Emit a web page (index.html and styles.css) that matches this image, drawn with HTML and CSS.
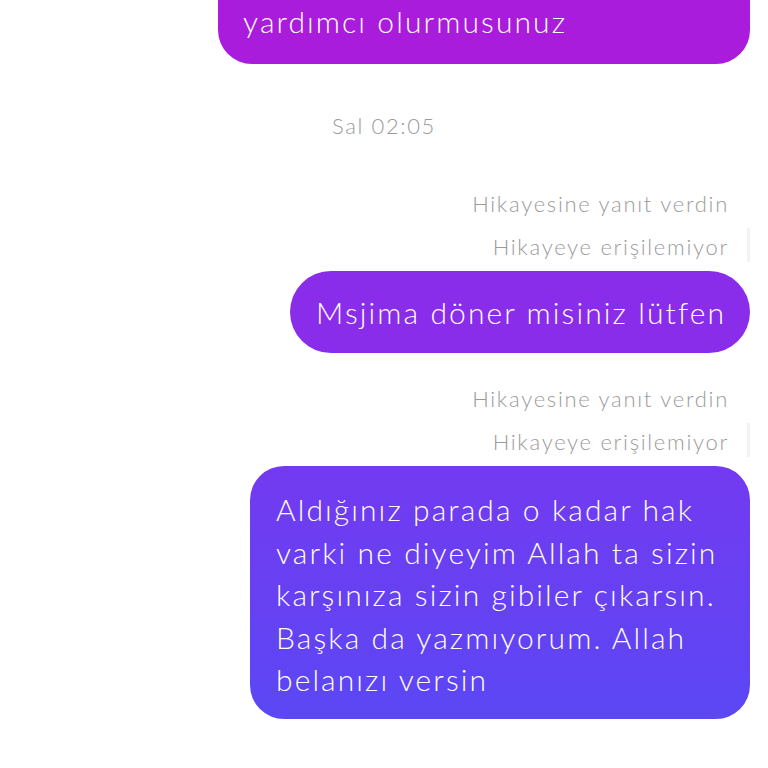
FILE: index.html
```html
<!DOCTYPE html>
<html lang="tr">
<head>
<meta charset="utf-8">
<link rel="stylesheet" href="styles.css">
</head>
<body>
<div class="thread">
  <div class="bubble bubble-top">yardımcı olurmusunuz</div>
  <div class="time">Sal 02:05</div>
  <div class="label first">Hikayesine yanıt verdin</div>
  <div class="label story"><span>Hikayeye erişilemiyor</span><i class="bar"></i></div>
  <div class="bubble bubble-pill">Msjima döner misiniz lütfen</div>
  <div class="label first second">Hikayesine yanıt verdin</div>
  <div class="label story"><span>Hikayeye erişilemiyor</span><i class="bar"></i></div>
  <div class="bubble bubble-long">Aldığınız parada o kadar hak<br>varki ne diyeyim Allah ta sizin<br>karşınıza sizin gibiler çıkarsın.<br>Başka da yazmıyorum. Allah<br>belanızı versin</div>
</div>
</body>
</html>
```

FILE: styles.css
```css
html, body {
  margin: 0;
  padding: 0;
  background: #ffffff;
}
.thread {
  width: 768px;
  height: 768px;
  overflow: hidden;
  display: flex;
  flex-direction: column;
  align-items: flex-end;
  padding-right: 18px;
  box-sizing: border-box;
  font-family: Lato, "Open Sans", sans-serif;
  font-weight: 300;
}
.bubble {
  color: #ffffff;
  font-size: 30px;
  letter-spacing: 2.1px;
  line-height: 42px;
  white-space: nowrap;
  box-sizing: border-box;
}
.bubble-top {
  width: 532px;
  background: #a91cdb;
  padding: 0 26px 22px 25px;
  border-radius: 0 0 34px 34px;
}
.time {
  align-self: center;
  margin: 47px -18px 0 0;
  color: #9b9b9b;
  font-size: 22px;
  letter-spacing: 1.6px;
  line-height: 30px;
}
.label {
  color: #9b9b9b;
  font-size: 22px;
  letter-spacing: 1.7px;
  line-height: 30px;
  margin-right: 21px;
}
.label.first { margin-top: 48px; }
.label.second { margin-top: 31px; }
.label.story {
  margin-top: 13px;
  margin-right: 0;
  display: flex;
  align-items: stretch;
  gap: 18px;
}
.label .bar {
  width: 3px;
  margin-top: -4px;
  background: #f2f2f2;
}
.bubble-pill {
  margin-top: 9px;
  background: #8a2dea;
  height: 82px;
  padding: 20px 24px 20px 26px;
  border-radius: 41px;
}
.bubble-long {
  margin-top: 9px;
  width: 500px;
  padding: 22px 26px 18px;
  border-radius: 34px;
  background: linear-gradient(180deg, #733af0 0%, #5b47f4 100%);
  line-height: 42.5px;
}
```
